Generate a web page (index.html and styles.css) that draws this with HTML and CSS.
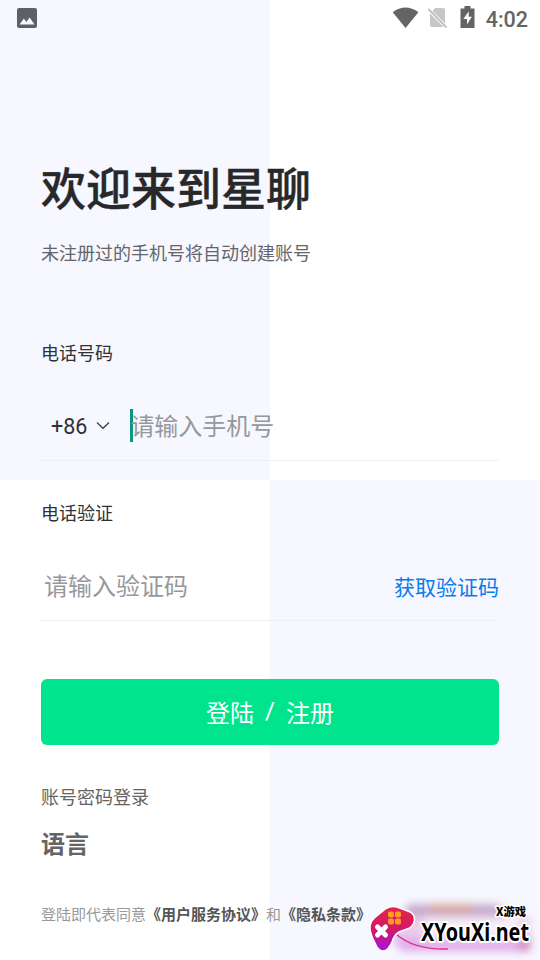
FILE: index.html
```html
<!DOCTYPE html>
<html lang="zh-CN">
<head>
<meta charset="utf-8">
<title>星聊</title>
<link rel="stylesheet" href="styles.css">
</head>
<body>
<div class="screen">
  <header class="status">
    <svg class="photo" width="20" height="20" viewBox="0 0 20 20"><path fill="#5f6064" fill-rule="evenodd" d="M2 0H18Q20 0 20 2V18Q20 20 18 20H2Q0 20 0 18V2Q0 0 2 0ZM2.500 16.500H17.500L12.600 9.500 9.300 14 6.900 10.500Z"/></svg>
    <div class="tray">
      <svg width="28" height="22" viewBox="0 0 28 22"><path fill="#646464" d="M.7 5.200Q13.500 -4 26.400 5.200L13.600 21Z"/></svg>
      <svg class="sim" width="22" height="22" viewBox="0 0 22 22"><path fill="#c6c6c6" d="M8 1H16Q18 1 18 3V16.500L5.500 4ZM3 6.500L16.500 20H5Q3 20 3 18Z"/><path d="M1.300 2L19.500 20.500" stroke="#c0c0c0" stroke-width="1.800"/></svg>
      <svg class="battery" width="15" height="22" viewBox="0 0 15 22"><path fill="#646464" d="M4.500 0H10.500V2.500H14.500V22H.5V2.500H4.500Z"/><path fill="#fff" d="M8.700 5.500L3.300 13H7V18.500L11.800 10.800H8.700Z"/></svg>
      <span class="clock">4:02</span>
    </div>
  </header>
  <main>
    <h1>欢迎来到星聊</h1>
    <p class="subtitle">未注册过的手机号将自动创建账号</p>
    <div class="label">电话号码</div>
    <div class="field">
      <span class="code">+86</span>
      <svg class="chevron" width="14" height="9" viewBox="0 0 14 9"><path d="M1 1.500L7 7.300 13 1.500" fill="none" stroke="#3b3d42" stroke-width="1.200"/></svg>
      <span class="caret"></span>
      <span class="hint">请输入手机号</span>
    </div>
    <div class="label">电话验证</div>
    <div class="field verify">
      <span class="hint">请输入验证码</span>
      <a class="send">获取验证码</a>
    </div>
    <button class="login"><span>登陆</span><span>/</span><span>注册</span></button>
    <a class="password">账号密码登录</a>
    <a class="language">语言</a>
    <p class="terms">登陆即代表同意<b>《用户服务协议》</b>和<b>《隐私条款》</b></p>
  </main>
  <svg class="watermark" width="180" height="70" viewBox="0 0 180 70">
    <defs>
      <linearGradient id="pad" x1="0" y1="0" x2="0" y2="1"><stop offset="0" stop-color="#e32646"/><stop offset=".5" stop-color="#d41869"/><stop offset="1" stop-color="#a512de"/></linearGradient>
      <linearGradient id="glow" x1="0" y1="0" x2="0" y2="1"><stop offset="0" stop-color="#b08ab6"/><stop offset=".45" stop-color="#eed6ef"/><stop offset="1" stop-color="#dc94e4"/></linearGradient>
      <filter id="soft" x="-20%" y="-40%" width="140%" height="180%"><feGaussianBlur stdDeviation="4"/></filter>
    </defs>
    <g filter="url(#soft)">
      <path fill="url(#glow)" d="M48 15H138L148 28H170V61H42L31 50Z" opacity=".9"/>
      <path fill="#e3a078" d="M70 14H112V23H70Z" opacity=".6"/>
      <path fill="#fff" d="M64 28H158V48H64Z" opacity=".7"/>
      <path fill="#c9618f" d="M158 54L170 46V60H158Z" opacity=".6"/>
    </g>
    <path d="M36 44Q54 60 88 59" fill="none" stroke="#d9368b" stroke-width="1.500"/>
    <path fill="url(#pad)" stroke="#fff" stroke-width="1.500" d="M26 18.500Q31 15.500 37 17L49 21.500Q55 24 54.500 30Q53.500 37 47 39L39 42Q34 45 32 52Q28 61 23 61Q18 61 15 53Q9.500 43 10 36Q11 30 18 25Z"/>
    <g fill="#ff9e20"><rect x="28" y="21.500" width="6" height="6" rx="2"/><rect x="35" y="21.500" width="6" height="6" rx="2"/><rect x="28" y="28.500" width="6" height="6" rx="2"/><rect x="35" y="28.500" width="6" height="6" rx="2"/></g>
    <path d="M17.500 37L25.500 45M25.500 37L17.500 45" stroke="#fff" stroke-width="5" stroke-linecap="round"/>
    <text class="site" x="61" y="50.500" textLength="108" lengthAdjust="spacingAndGlyphs">XYouXi.net</text>
    <text class="brand" x="136" y="26" textLength="30" lengthAdjust="spacingAndGlyphs">X游戏</text>
  </svg>
</div>
</body>
</html>
```
FILE: styles.css
```css
* { box-sizing: border-box; margin: 0; padding: 0; }
body { font-family: Roboto, "Noto Sans CJK SC", sans-serif; }
.screen {
  position: relative;
  width: 540px;
  height: 960px;
  overflow: hidden;
  background: conic-gradient(#fff 0 25%, #f6f7ff 0 50%, #fff 0 75%, #f6f7ff 0);
}
.status { display: flex; justify-content: space-between; height: 36px; padding: 7px 12px 0 17px; }
.photo { margin-top: 1px; }
.tray { display: flex; }
.sim { margin-left: 7px; }
.battery { margin-left: 11px; margin-top: -1px; }
.clock { margin-left: 11px; font-size: 21.500px; line-height: 25px; font-weight: 500; color: #646464; }
main { display: flex; flex-direction: column; padding: 127px 41px 0; }
h1 { height: 56px; font-size: 45px; line-height: 56px; font-weight: 500; color: #27282a; -webkit-text-stroke: .4px #27282a; }
.subtitle { margin-top: 22px; font-size: 18px; line-height: 26px; color: #646569; }
.label { margin-top: 74px; font-size: 18px; line-height: 26px; color: #303134; }
.field { display: flex; align-items: center; height: 68px; margin-top: 26px; border-bottom: 1px solid #eff0f4; }
.field + .label { margin-top: 40px; }
.code { margin-left: 10px; font-size: 21.500px; color: #303134; }
.chevron { margin-left: 9px; margin-bottom: 2px; }
.caret { width: 3px; height: 33px; margin-left: 20px; margin-bottom: 2px; background: #079681; }
.hint { margin-left: -3px; font-size: 24px; line-height: 34px; color: #97989b; }
.caret, .chevron { flex: none; }
.verify .hint { margin-left: 3px; }
.send { margin-left: auto; padding-bottom: 2px; font-size: 21px; color: #087bed; }
.login { display: flex; justify-content: center; align-items: center; gap: 11px; height: 66px; margin-top: 58px; padding-bottom: 2px; border: 0; border-radius: 6px; background: #00e58d; color: #fff; font: inherit; font-size: 24px; }
.password { margin-top: 40px; font-size: 18px; line-height: 26px; color: #646464; }
.language { margin-top: 17px; font-size: 24px; line-height: 34px; font-weight: 700; color: #646464; }
.terms { margin-top: 42px; font-size: 15px; line-height: 22px; white-space: nowrap; color: #999; }
.terms b { color: #555; }
.watermark { position: absolute; left: 360px; top: 890px; }
.site, .brand { paint-order: stroke; stroke: #fff; stroke-linejoin: round; }
.site { font: 700 25px "Noto Sans", sans-serif; stroke-width: 4px; }
.brand { font: 900 11px "Noto Sans CJK SC", sans-serif; stroke-width: 3px; }
```
